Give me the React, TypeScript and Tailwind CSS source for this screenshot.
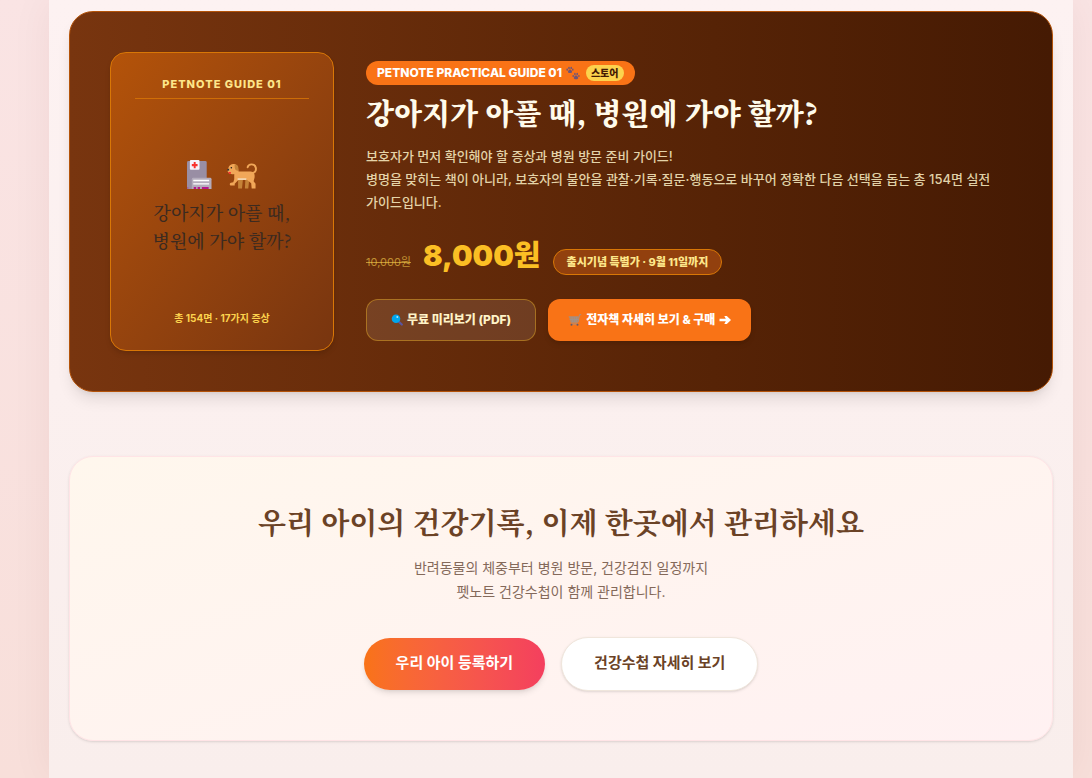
function Hospital() {
  return (
    <svg viewBox="0 0 26 32" className="w-[25px] h-[31px]" aria-hidden="true">
      <path d="M0 3.500Q0 2 1.500 2H19q1.500 0 1.500 1.500V31H0z" fill="#998ea4" />
      <rect x="3" y="1" width="10" height="10" rx="1" fill="#f6f1fa" />
      <path d="M7 3h2v2h2v2.500H9v2H7v-2H5V5h2z" fill="#f8312f" />
      <path d="M5 21q0-1.500 1.500-1.500H24q1.500 0 1.500 1.500v10H5z" fill="#b4acbc" />
      <path d="M6.500 21.500h16.500v1.500H6.500zM6.500 25h16.500v1.500H6.500z" fill="#fff" />
      <path d="M7 29h2.500v2H7zM11 29h2.500v2H11zM15.500 29h7v2h-7z" fill="#b4188c" />
      <path d="M0 29h1.500v2H0z" fill="#b4188c" opacity=".35" />
    </svg>
  );
}

function Dog() {
  return (
    <svg viewBox="0 0 32 32" className="w-[31px] h-[31px]" aria-hidden="true">
      <path d="M12.500 21h5l-1 9.500h-4zM20 21h4l-1 9.500h-3.500z" fill="#c58338" />
      <path
        d="M26 15c4-.5 5.300-3 4.800-6-.8-4.500-7.500-4.500-8.500-.5"
        fill="none"
        stroke="#f1a758"
        strokeWidth="2"
        strokeLinecap="round"
      />
      <path
        d="M2.500 9C3.500 5.500 7 4.500 9.500 5.500c2.500.8 3 3.500 3.500 7.500h12.500c3.500 0 4.500 3 4 6l-1 4 2 2.500v5h-4l-.5-5.500-4.500-3.500h-8.500L9 25.500v1.800H4.500q-1.500-1.800.5-2.800l2.500-.5 1-3V15.500c-2 .5-5 .3-6.300-1.500-1-2-.2-3.500.3-5z"
        fill="#f1a758"
      />
      <path d="M9 5.500c3 .3 4.500 2.500 3.500 6.500-2.800.3-4-2-3.500-6.500z" fill="#c58338" />
      <circle cx="5.500" cy="9" r=".8" fill="#1c1c1c" />
      <path d="M1.200 10.500l2-.8v2.200l-1.700.3z" fill="#333" />
      <path d="M2 13.500h3v1.500l-1.300.8z" fill="#f8312f" />
      <path d="M12 20h9v1.500h-9z" fill="#f6e3c4" />
    </svg>
  );
}

function Paws() {
  return (
    <svg viewBox="0 0 14 14" className="w-[14px] h-[14px]" fill="#6f5577" aria-hidden="true">
      <path d="M4 3.500c1.500 0 2.800 2.800 1.500 3.300-.8.300-2.200.3-3 0C1.200 6.300 2.500 3.500 4 3.500z" />
      <ellipse cx="1.200" cy="3.700" rx=".8" ry="1.100" />
      <ellipse cx="3" cy="1.900" rx=".8" ry="1.200" />
      <ellipse cx="5.200" cy="1.900" rx=".8" ry="1.200" />
      <ellipse cx="6.800" cy="3.700" rx=".8" ry="1.100" />
      <path d="M10 9.500c1.600 0 3 2.800 1.600 3.400-.9.300-2.300.3-3.200 0C7 12.300 8.400 9.500 10 9.500z" />
      <ellipse cx="7.200" cy="10" rx=".8" ry="1.100" />
      <ellipse cx="8.900" cy="8" rx=".8" ry="1.200" />
      <ellipse cx="11.200" cy="8" rx=".8" ry="1.200" />
      <ellipse cx="12.900" cy="10" rx=".8" ry="1.100" />
    </svg>
  );
}

function Magnifier() {
  return (
    <svg viewBox="0 0 12 12" className="w-3 h-3" aria-hidden="true">
      <path d="M7.500 7.500l3.300 3" stroke="#5a55a0" strokeWidth="2.200" strokeLinecap="round" />
      <circle cx="5" cy="4.800" r="4.300" fill="#00a6ed" />
      <circle cx="6.300" cy="3" r="1" fill="#a8e4ff" />
    </svg>
  );
}

function Cart() {
  return (
    <svg viewBox="0 0 14 12" className="w-[14px] h-3" fill="none" aria-hidden="true">
      <path d="M1 3h9.500L9.500 8H2.500z" fill="#b58a6c" />
      <path
        d="M.7 2.800h10M2.500 8.200h7.500l1.500-7.500h1.700M4 3l.5 5M6.300 3v5M8.500 3L8 8M1.700 5.500h8.500M3 10h6.500"
        stroke="#9b9391"
        strokeWidth=".9"
      />
      <circle cx="3.500" cy="10.800" r="1" fill="#655966" />
      <circle cx="9.500" cy="10.800" r="1" fill="#655966" />
    </svg>
  );
}

function Arrow() {
  return (
    <svg viewBox="0 0 12 10" className="w-3 h-[10px]" aria-hidden="true">
      <path d="M.5 3.800h6.300L5.300 1h2.500L12 5 7.800 9H5.300l1.500-2.800H.5z" fill="currentColor" />
    </svg>
  );
}

function GuideCover() {
  return (
    <div className="w-56 aspect-[3/4] shrink-0 flex flex-col items-center justify-between text-center rounded-2xl border border-[#d97706] bg-linear-to-br from-[#b45309] to-[#78350f] p-6 shadow-md">
      <p className="w-full pb-[7px] border-b border-[#d97706]/80 text-[11px] leading-[14px] font-extrabold tracking-[1px] text-[#fde68a]">
        PETNOTE GUIDE 01
      </p>
      <div className="flex flex-col items-center pt-1">
        <div className="flex items-center gap-[14px] mb-2">
          <Hospital />
          <Dog />
        </div>
        <h3 className="text-lg leading-7 font-medium text-[#3b2a20] font-['Noto_Serif_CJK_KR','Noto_Sans_CJK_KR',serif]">
          강아지가 아플 때,
          <br />
          병원에 가야 할까?
        </h3>
      </div>
      <p className="text-[10px] leading-4 font-bold text-[#fcd34d]">총 154면 · 17가지 증상</p>
    </div>
  );
}

function GuideCard() {
  return (
    <section className="flex items-center gap-8 rounded-3xl border border-[#b45309] bg-linear-to-r from-[#78350f] to-[#451a03] p-10 shadow-lg">
      <GuideCover />
      <div className="flex-1 min-w-0 break-keep">
        <div className="flex">
          <span className="h-6 flex items-center rounded-full bg-[#f97316] px-[11px] text-xs font-extrabold text-white">
            PETNOTE PRACTICAL GUIDE 01
            <span className="ml-1 mr-[6px]">
              <Paws />
            </span>
            <span className="rounded-full bg-[#fcd34d] px-[5px] text-[10px] leading-4 text-[#451a03]">
              스토어
            </span>
          </span>
        </div>
        <h2 className="mt-2 text-[29px] leading-10 font-black text-[#fffbeb] font-['Noto_Serif_CJK_KR','Noto_Sans_CJK_KR',serif]">
          강아지가 아플 때, 병원에 가야 할까?
        </h2>
        <p className="mt-3 text-[13px] leading-[23px] font-medium text-[#fef3c7]/85">
          보호자가 먼저 확인해야 할 증상과 병원 방문 준비 가이드!
          <br />
          병명을 맞히는 책이 아니라, 보호자의 불안을 관찰·기록·질문·행동으로 바꾸어 정확한 다음 선택을 돕는 총 154면 실전
          가이드입니다.
        </p>
        <div className="mt-6 flex items-baseline gap-3">
          <del className="text-[11px] text-[#fcd34d]/60">10,000원</del>
          <strong className="text-[29px] leading-9 font-black text-[#fbbf24]">8,000원</strong>
          <span className="rounded-full border border-[#d97706] bg-[#92400e] px-[13px] text-[11px] leading-6 font-extrabold text-[#fde68a]">
            출시기념 특별가 · 9월 11일까지
          </span>
        </div>
        <div className="mt-6 flex gap-3 text-xs font-extrabold">
          <button className="h-[42px] flex items-center gap-1 rounded-xl border border-[#fbbf24]/40 bg-white/10 px-6 text-[#fef3c7]">
            <Magnifier />
            무료 미리보기 (PDF)
          </button>
          <button className="h-[42px] flex items-center gap-1 rounded-xl bg-[#f97316] px-5 text-white shadow-md">
            <Cart />
            전자책 자세히 보기 &amp; 구매
            <Arrow />
          </button>
        </div>
      </div>
    </section>
  );
}

function RegisterCard() {
  return (
    <section className="flex flex-col items-center text-center rounded-3xl border border-[#ffe4e6] bg-linear-to-br from-[#fff7ed] to-[#fff1f2] px-10 pt-[45px] pb-[49px] shadow-sm">
      <h2 className="text-[29px] leading-10 font-bold text-[#6b4226] font-['Noto_Serif_CJK_KR','Noto_Sans_CJK_KR',serif]">
        우리 아이의 건강기록, 이제 한곳에서 관리하세요
      </h2>
      <p className="mt-[14px] text-sm leading-6 text-[#84695a]">
        반려동물의 체중부터 병원 방문, 건강검진 일정까지
        <br />
        펫노트 건강수첩이 함께 관리합니다.
      </p>
      <div className="mt-[33px] flex items-center gap-4 text-[15px] font-bold">
        <button className="h-[52px] rounded-full bg-linear-to-r from-[#f97316] to-[#f43f5e] px-8 text-white shadow-md">
          우리 아이 등록하기
        </button>
        <button className="h-[54px] rounded-full border border-[#f0e6dc] bg-white px-8 text-[#6b4226] shadow-sm">
          건강수첩 자세히 보기
        </button>
      </div>
    </section>
  );
}

export default function App() {
  return (
    <div className="min-h-screen flex bg-linear-to-b from-[#fae4e4] to-[#f8dfda] pl-[49px] pr-[19px] font-[Inter,'Noto_Sans_CJK_KR',sans-serif]">
      <main className="flex-1 min-w-0 flex flex-col gap-16 bg-linear-to-b from-[#fdf2f2] to-[#f9eeec] px-5 pt-[11px] pb-9 shadow-[0_0_40px_rgba(80,30,20,0.06)]">
        <GuideCard />
        <RegisterCard />
      </main>
    </div>
  );
}
